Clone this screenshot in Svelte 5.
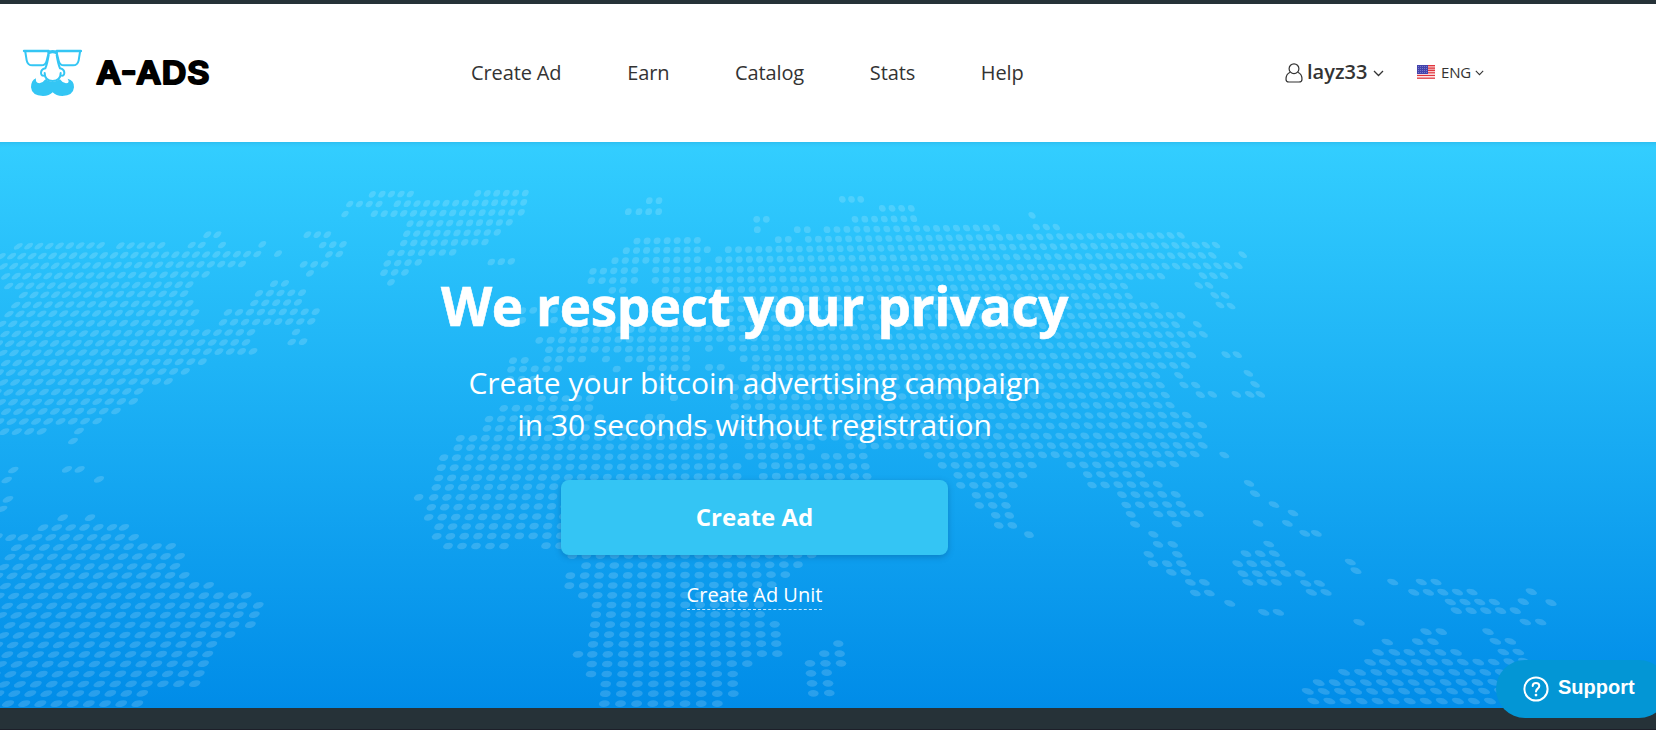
<script>
  // Dotted world map. Each patch has an origin in page pixels; its runs are
  // [x1, y1, x2, y2, count] in thirds of a pixel, a single dot is [x, y].
  const patches = [
    { x: 0, y: 180, runs: [
      [1117,43,1203,42,4],[1049,72,1137,72,4],[1192,71],[1035,102],[1123,101,1182,101,3],
      [622,164,652,164,2],[922,164,982,164,3],
      [55,199,302,196,9],[361,197,484,196,5],[575,195,605,195,2],[666,195],[787,193],[968,195,1029,193,3],
      [4,229,772,222,26],[834,221],[987,223,1018,222,2],[1173,219],
      [10,259,726,252,24],[911,253,974,253,3],[1162,250,1193,249,2],
      [17,289,617,283,20],[930,280],[1152,278,1184,277,2],[1173,307],[822,311,855,310,2],
      [26,318,568,314,18],[70,345,552,341,16],[777,340,906,338,5],
      [47,375,568,370,17],[763,369,894,367,5],[27,402,585,398,18],[684,397,947,395,9],
      [5,432,570,428,18],[669,427,934,424,9],[15,462,753,457,23],[888,456],
      [-5,491,738,487,23],[875,486,909,485,2],[8,519,759,514,23],[17,549,607,545,18],
      [-3,578,556,574,17],[10,607,505,604,15],[-10,637,416,634,13],[3,667,400,664,12],
      [18,695,348,693,10],[-2,725,292,723,9],[13,755,125,754,4],[237,753],[219,783]
    ] },
    { x: 0, y: 440, runs: [
      [40,90],[201,88,239,88,2],[20,120],[297,118],[24,178],[6,207],[188,233],[270,233],
      [129,263,295,262,5],[336,262,372,262,2],[-8,290],[32,293,69,292,2],[111,292,401,292,8],
      [49,323,512,319,12],[30,351,539,349,13],[11,381,525,379,13],[-7,408,553,406,14],
      [16,438,626,436,15],[-3,468,699,467,17],[739,466],[22,498,687,497,16],[726,497],[775,496],
      [4,526,675,525,16],[715,524],[763,524],[29,556,661,554,15],[702,554],[751,554],
      [10,586,648,584,15],[690,584],[-8,615,635,613,15],[22,644,623,642,14],[3,673,610,671,14],
      [-16,703,597,701,14],[12,733,584,731,13],[-5,761,427,760,10],[24,791,412,791,9]
    ] },
    { x: 400, y: 180, runs: [
      [31,42],[233,40,376,39,6],[22,71,196,69,7],[226,69,371,67,6],[11,100,364,97,13],
      [30,131,328,127,11],[20,161,292,157,10],[11,189,255,186,9],[3,219,158,217,6],
      [24,248,55,247,2],[274,246,334,244,3],[15,277],[748,62,777,62,2],[685,95,717,95,2],[746,95,776,95,2],
      [1070,118,1099,118,2],[1072,149],[1192,149],[711,183,892,181,7],[1135,179,1165,178,2],
      [679,212,922,209,9],[985,209,1198,207,8],[645,242,892,239,9],[956,239,1171,237,8],
      [579,274,704,271,5],[767,270,1179,267,14],[574,302,703,301,5],[766,301,1181,297,14],
      [637,331,668,331,2],[796,330,1187,327,13],[958,358,1190,356,8],
      [367,392,400,391,2],[462,390],[958,387,1190,385,8],[367,421],[462,420],[955,417,1190,415,8],
      [490,451,1196,443,22],[418,481,1197,473,24],[447,509,858,506,13],[927,505],[996,505,1198,502,7],
      [443,538,546,537,4],[618,537],[686,537,858,535,6],[1031,536],[1068,535,1201,534,5],
      [339,542,374,541,2],[334,568],[369,567,474,566,4],[650,567],[753,564,859,563,4],[927,562,962,562,2],[1067,563,1203,563,5],
      [330,598,400,597,3],[575,595],[788,594],[990,592,1203,592,7],[788,624],[965,622,1203,622,7],
      [425,656,570,655,5],[822,653],[1002,651,1186,651,6],[311,685,567,683,8],[1004,679,1187,681,6],
      [267,717,600,713,10],[747,711,783,711,2],[1005,711,1190,712,6],[261,745,925,741,19],[1010,741,1195,742,6],
      [181,775,933,770,21],[1045,770,1190,771,5]
    ] },
    { x: 400, y: 440, runs: [
      [174,23,970,19,22],[1046,18,1160,17,4],[1197,21],[131,53,970,49,23],[1048,49,1162,48,4],[1201,50],
      [124,83,1011,79,24],[1088,77,1165,77,3],[1204,80],[116,114,1011,109,24],[1090,109,1168,108,3],[1207,110],
      [109,142,461,140,10],[56,172],[101,172,458,170,10],[94,202,495,199,11],[86,232,491,229,11],
      [117,260,484,258,10],[110,289,482,287,10],[144,318,312,318,5],[438,317,480,317,2],
      [517,347,1235,345,18],[558,377,1194,374,16],[511,407,1156,404,16],[508,437,1115,434,15],
      [549,466,1074,465,13],[590,495,1077,494,12],[588,524,1080,523,12],[585,554,1124,553,13],
      [582,584,1127,583,13],[579,613,1129,611,13],[534,643],[577,643,1132,641,13],[575,672,1042,671,11],
      [573,702,998,702,10],[617,732,998,731,9],[616,761,1000,761,9],[613,791,952,791,8]
    ] },
    { x: 800, y: 180, runs: [
      [127,58,182,58,3],[247,85,334,85,4],[165,118,341,116,7],[696,106],[22,149],[81,149,589,143,18],[709,141,769,141,3],
      [25,178,1142,166,38],[29,207,1248,195,41],[2,236,1237,226,41],[1328,224],[6,267,1315,257,43],
      [9,298,1083,288,35],[1209,287,1272,287,3],[15,328,972,318,31],[1196,316,1227,316,2],
      [17,355,986,348,31],[1244,346,1275,346,2],[20,384,1064,377,33],[1260,375,1293,378,2],
      [20,413,1143,406,35],[28,443,1127,434,34],[1192,433],[30,472,1210,463,36],[32,502,1158,494,34],
      [37,533,1175,525,34],[1278,524,1312,524,2],[37,563,1156,556,33],[37,593,1067,586,30],[1136,586],[1345,580],
      [37,622,1081,615,30],[1152,615,1187,615,2],[1365,613],[20,651,1096,645,31],[1201,644,1237,643,2],[1309,643],[1349,643,1381,643,2],
      [20,681,1110,675,31],[25,711,1160,705,32],[30,742,1168,735,31],[1207,735],[30,772,1192,766,32]
    ] },
    { x: 800, y: 440, runs: [
      [33,21],[149,18,1208,16,29],[76,49,112,49,2],[154,48,190,48,2],[385,46,1184,42,22],[1273,45],
      [40,79],[80,79,118,79,2],[159,79,196,79,2],[427,76,697,75,8],[813,75,1123,72,9],
      [44,109],[85,109,122,109,2],[164,109,201,109,2],[474,106,668,105,6],[863,104,1021,103,5],
      [482,136,639,135,5],[876,135,1073,133,6],[529,166,608,166,3],[966,164,1127,163,5],
      [538,196,618,196,3],[979,195,1142,193,5],[587,226,628,226,2],[992,223],[1075,222,1196,221,4],
      [596,256,637,256,2],[1005,253],[1130,252],[687,284],[1060,283],[1074,313,1118,313,2],[1046,343],[1132,343],
      [1059,371,1144,371,3],[1114,397,1157,397,2],[1171,427,1213,427,2],[1186,459,1228,459,2],[1289,490],
      [115,611],[73,641,119,641,2],[30,670,123,670,3],[33,700,80,698,2],[36,730,84,730,2],[40,760,88,759,2]
    ] },
    { x: 1200, y: 440, runs: [
      [147,130],[165,161],[222,194],[279,219],[174,250],[262,250],[314,280,349,280,2],[206,312],[138,341,223,341,3],
      [113,371,240,371,4],[129,401,300,400,5],[143,427,229,427,3],[317,430,358,430,2],[334,457,378,457,2],[191,517,235,517,2],
      [451,366],[468,392],[578,426],[664,426,708,426,2],[641,457,816,456,5],[751,486,883,486,4],[769,512,946,512,5],
      [970,485],[994,455],[1053,488],[976,546,1022,546,2],[477,547],[678,575,724,575,2],[864,575],[562,606],
      [653,605,699,605,2],[886,604,931,604,2],[534,637,583,637,2],[628,637,768,637,4],[910,636,955,636,2],
      [510,667,554,667,2],[603,667,881,666,7],[928,665,972,663,2],[432,697,480,697,2],[529,697,856,697,8],[902,697],
      [356,728,404,728,2],[450,728,880,727,10],[323,754,371,754,2],[420,754,900,753,11],[340,783,870,783,12],[920,783]
    ] }
  ];

  // Every dot is an ellipse that widens to the south and leans away from the centre meridian.
  function dot(x, y) {
    const rx = 3.3 + (y - 200) * 0.0042;
    const ry = 3.35;
    const lean = Math.max(-0.82, Math.min(0.85, (780 - x) / (x < 780 ? 900 : 600)));
    return `matrix(${rx.toFixed(2)} 0 ${(-lean * ry).toFixed(2)} ${ry} ${x.toFixed(1)} ${y.toFixed(1)})`;
  }

  const dots = patches.flatMap((p) =>
    p.runs.flatMap(([x1, y1, x2 = x1, y2 = y1, n = 1]) =>
      Array.from({ length: n }, (_, i) => {
        const t = n > 1 ? i / (n - 1) : 0;
        return dot(p.x + (x1 + (x2 - x1) * t) / 3, p.y + (y1 + (y2 - y1) * t) / 3);
      })
    )
  );

  const links = ['Create Ad', 'Earn', 'Catalog', 'Stats', 'Help'];
</script>

<div class="page">
  <header>
    <a class="logo" href="#home" aria-label="A-ADS">
      <svg width="60" height="50" viewBox="66 144 180 150" fill="none" stroke="#34c6f4" stroke-width="6" stroke-linecap="round" stroke-linejoin="round">
        <path stroke-width="7" d="M72 153H146M170 153H243" />
        <path stroke-width="10" d="M147 157Q158 153 169 157" />
        <path d="M76 156L80 181Q83 196 97 196H124Q137 196 140 182L146 158M240 156L236 181Q233 196 219 196H192Q179 196 176 182L170 158" />
        <path d="M146 165Q142 191 136 205Q123 208 123 219Q124 230 134 226M134 219Q134 242 158 243Q182 242 182 219M170 165Q174 191 180 205Q193 208 193 219Q192 230 182 226" />
        <path stroke="none" fill="#34c6f4" d="M93 262Q93 241 108 235Q105 249 118 250Q130 248 136 238Q146 245 158 245Q170 245 180 238Q186 248 198 250Q211 249 203 236Q223 241 222 262Q220 287 187 288Q168 288 158 277Q148 288 129 288Q95 287 93 262Z" />
      </svg>
      <svg class="word" width="130" height="48" viewBox="0 0 130 48">
        <text x="2" y="35" transform="scale(1.1 1)" textLength="103" lengthAdjust="spacing">A-ADS</text>
      </svg>
    </a>
    <nav>
      {#each links as link}
        <a href="#top">{link}</a>
      {/each}
    </nav>
    <div class="account">
      <svg width="18" height="20" viewBox="0 0 18 20" fill="none" stroke="#333" stroke-width="1.2">
        <circle cx="9" cy="5.7" r="4.9" />
        <path d="M5.2 9.2C2.4 10.3 1 13 1 16.2C1 18.2 2 19 4 19H14C16 19 17 18.2 17 16.2C17 13 15.6 10.3 12.8 9.2" />
      </svg>
      <span class="user">layz33</span>
      <svg class="caret" width="11" height="7" viewBox="0 0 11 7"><path d="M1 1L5.5 5.5L10 1" /></svg>
    </div>
    <div class="lang">
      <svg width="18" height="14" viewBox="0 0 18 14">
        <rect width="18" height="14" fill="#f7c4c7" />
        <path d="M0 .7H18M0 3.1H18M0 5.4H18M0 7.8H18M0 10.4H18M0 13.2H18" stroke="#e0343c" stroke-width="1.2" />
        <path d="M0 9.2H18M0 11.8H18" stroke="#fff" stroke-width=".8" />
        <rect width="11" height="9" fill="#4343ac" />
        <path d="M1 1.5H11M1 3.5H11M1 5.5H11M1 7.5H11" stroke="#8888d0" stroke-width=".8" stroke-dasharray="1 1" />
      </svg>
      <span>ENG</span>
      <svg class="caret" width="9" height="6" viewBox="0 0 11 7"><path d="M1 1L5.5 5.5L10 1" /></svg>
    </div>
  </header>

  <main>
    <svg class="map" width="1656" height="566" viewBox="0 142 1656 566" aria-hidden="true">
      {#each dots as matrix}
        <circle r="1" transform={matrix} />
      {/each}
    </svg>
    <section>
      <h1>We respect your privacy</h1>
      <p>Create your bitcoin advertising campaign<br />in 30 seconds without registration</p>
      <a class="button" href="#create">Create Ad</a>
      <a class="unit" href="#unit">Create Ad Unit</a>
    </section>
  </main>
  <footer></footer>

  <button class="support">
    <svg width="26" height="26" viewBox="0 0 26 26" fill="none" stroke="#fff" stroke-linecap="round">
      <circle cx="13" cy="13" r="11.6" stroke-width="2" />
      <path d="M9.7 10C9.7 5.9 16.3 5.9 16.3 10C16.3 12.6 13 12.7 13 15.6" stroke-width="2" />
      <circle cx="13" cy="19.1" r="1.4" fill="#fff" stroke="none" />
    </svg>
    <span>Support</span>
  </button>
</div>

<style>
  :global(body) { margin: 0; overflow: hidden; }
  .page {
    position: relative;
    width: 1656px;
    height: 730px;
    overflow: hidden;
    box-sizing: border-box;
    border-top: 4px solid #263238;
    font-family: "Open Sans", "Noto Sans", sans-serif;
    display: flex;
    flex-direction: column;
  }
  a { color: inherit; text-decoration: none; }
  header {
    height: 138px;
    flex: none;
    display: flex;
    align-items: center;
    color: #333;
    background: #fff;
  }
  .logo { display: flex; align-items: center; width: 449px; padding-left: 22px; }
  .word { margin-left: 12px; }
  .word text {
    font: 600 31px "Inter", sans-serif;
    fill: #000;
    stroke: #000;
    stroke-width: 2px;
    stroke-linejoin: round;
  }
  nav { display: flex; gap: 65.7px; width: 814px; font-size: 20px; line-height: 28px; letter-spacing: -.12px; }
  nav a { white-space: nowrap; }
  .account, .lang { display: flex; align-items: center; }
  .account { width: 132px; }
  .user { font-size: 20px; font-weight: 600; line-height: 26px; margin: -3px 6px 0 4px; }
  .lang svg:first-child { margin-top: -2px; }
  .lang span { font-size: 15px; letter-spacing: -.2px; margin: -2px 4px 0 6px; }
  .caret path { fill: none; stroke: #333; stroke-width: 1.3; }
  main {
    position: relative;
    height: 566px;
    flex: none;
    background: linear-gradient(#33ceff, #008ce8);
    box-shadow: inset 0 5px 5px -5px rgba(0, 80, 130, .25);
  }
  .map { position: absolute; left: 0; top: 0; fill: #fff; fill-opacity: .16; }
  section {
    position: relative;
    width: 1509px;
    display: flex;
    flex-direction: column;
    align-items: center;
    color: #fff;
    text-align: center;
  }
  h1 {
    margin: 127px 0 0;
    font-size: 53px;
    line-height: 74px;
    font-weight: 700;
    letter-spacing: -.38px;
    white-space: nowrap;
    -webkit-text-stroke: .6px #fff;
  }
  p { margin: 19px 0 0; font-size: 30px; line-height: 42px; }
  .button {
    margin-top: 34px;
    width: 387px;
    height: 75px;
    border-radius: 8px;
    background: #34c5f4;
    box-shadow: 0 2px 6px rgba(0, 50, 90, .28);
    font-size: 24px;
    font-weight: 700;
    line-height: 73px;
  }
  .unit { margin-top: 26px; padding-bottom: 1px; font-size: 20px; line-height: 27px; border-bottom: 1px dashed rgba(255, 255, 255, .75); }
  footer { flex: 1; background: #263238; border-bottom: 1px solid #1d1f29; }
  .support {
    position: absolute;
    left: 1496px;
    top: 656px;
    width: 172px;
    height: 58px;
    border: 0;
    border-radius: 29px;
    padding: 0 0 1px 27px;
    display: flex;
    align-items: center;
    background: #0396d5;
    color: #fff;
    font: 700 20px "Liberation Sans", Arial, sans-serif;
  }
  .support span { margin: -2px 0 0 9px; }
</style>
